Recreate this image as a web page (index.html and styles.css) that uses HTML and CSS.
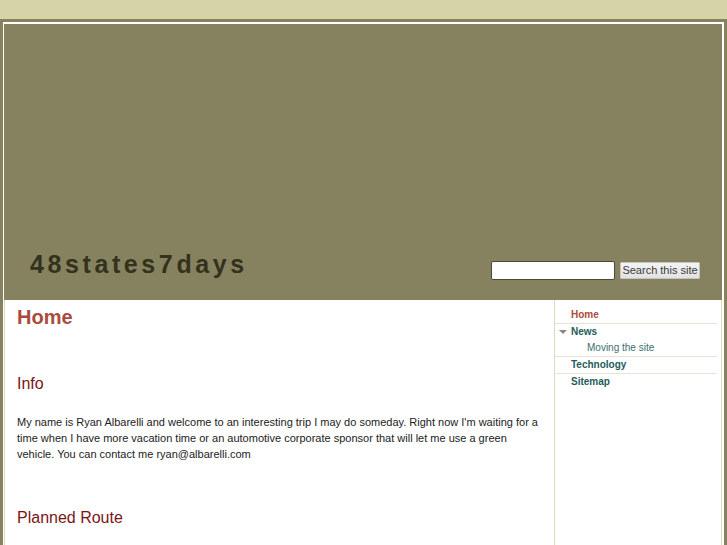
FILE: index.html
```html
<!DOCTYPE html>
<html>
<head>
<meta charset="utf-8">
<title>48states7days</title>
<link rel="stylesheet" href="styles.css">
</head>
<body>
<div class="topbar"></div>
<div class="frame">
  <header class="header">
    <div class="logo">48states7days</div>
    <form class="search">
      <input class="search-input" type="text">
      <button class="search-btn" type="button">Search this site</button>
    </form>
  </header>
  <div class="content">
    <main class="main">
      <h1 class="page-title">Home</h1>
      <h2 class="section-title info">Info</h2>
      <p class="body-text">My name is Ryan Albarelli and welcome to an interesting trip I may do someday. Right now I'm waiting for a time when I have more vacation time or an automotive corporate sponsor that will let me use a green vehicle. You can contact me ryan@albarelli.com</p>
      <h2 class="section-title route">Planned Route</h2>
    </main>
    <aside class="sidebar">
      <ul class="nav">
        <li class="nav-item current sep">Home</li>
        <li class="nav-item"><span class="tri"></span>News</li>
        <li class="nav-sub sep">Moving the site</li>
        <li class="nav-item sep">Technology</li>
        <li class="nav-item">Sitemap</li>
      </ul>
    </aside>
  </div>
</div>
</body>
</html>
```
FILE: styles.css
```css
html, body {
  margin: 0;
  padding: 0;
}
body {
  background: #86825f;
  font-family: "Liberation Sans", Arial, sans-serif;
  height: 545px;
  overflow: hidden;
}
.topbar {
  height: 19px;
  background: #d6d4a6;
}
.frame {
  margin: 3px 3px 0 3px;
  border-top: 2px solid #ffffff;
  border-left: 1px solid #ffffff;
  border-right: 2px solid #ffffff;
  background: #ffffff;
}
.header {
  height: 276px;
  box-sizing: border-box;
  background: #86825f;
  display: flex;
  align-items: flex-end;
  justify-content: space-between;
  padding: 0 22px 20px 26px;
}
.logo {
  font-size: 25px;
  line-height: 28px;
  font-weight: bold;
  letter-spacing: 3.6px;
  color: #34321c;
  margin-bottom: 2px;
}
.search {
  display: flex;
  align-items: center;
  gap: 5px;
  margin: 0;
}
.search-input {
  width: 124px;
  height: 19px;
  box-sizing: border-box;
  border: 1px solid #4a4838;
  border-radius: 2px;
  background: #ffffff;
  margin: 0;
  padding: 0;
}
.search-btn {
  width: 80px;
  height: 17px;
  box-sizing: border-box;
  border: 1px solid #c4c4bc;
  border-radius: 1px;
  background: linear-gradient(#f4f4f4, #e2e2e2);
  font-family: "Liberation Sans", Arial, sans-serif;
  font-size: 11px;
  line-height: 15px;
  color: #3a3a3a;
  padding: 0;
  margin: 0;
}
.content {
  display: flex;
  border-left: 1px solid #dedbbd;
  border-right: 1px solid #dedbbd;
  min-height: 260px;
}
.main {
  flex: 1;
  padding: 5px 12px 0 12px;
}
.page-title {
  margin: 0;
  font-size: 20px;
  line-height: 24px;
  font-weight: bold;
  color: #a94c3c;
}
.section-title {
  margin: 0;
  font-size: 16px;
  line-height: 20px;
  font-weight: normal;
  color: #7b1515;
}
.info {
  margin-top: 45px;
}
.body-text {
  margin: 20px 0 0 0;
  font-size: 11px;
  line-height: 16px;
  color: #222222;
}
.route {
  margin-top: 46px;
}
.sidebar {
  width: 162px;
  border-left: 1px solid #dedbbd;
  padding: 7px 4px 0 0;
}
.nav {
  list-style: none;
  margin: 0;
  padding: 0;
}
.nav-item, .nav-sub {
  font-size: 10px;
  line-height: 16px;
  position: relative;
}
.nav-item {
  padding-left: 16px;
  font-weight: bold;
  color: #245c5c;
}
.nav-item.current {
  color: #a94c3c;
}
.nav-sub {
  padding-left: 32px;
  color: #3d6e6e;
}
.sep {
  border-bottom: 1px solid #e6e4d4;
}
.tri {
  position: absolute;
  left: 4px;
  top: 6px;
  width: 0;
  height: 0;
  border-left: 4px solid transparent;
  border-right: 4px solid transparent;
  border-top: 4px solid #888888;
}
```
